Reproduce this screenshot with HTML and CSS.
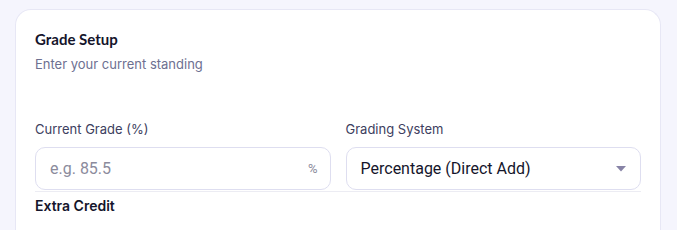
FILE: index.html
```html
<!DOCTYPE html>
<html lang="en">

<head>
    <meta charset="UTF-8">
    <meta name="viewport" content="width=device-width, initial-scale=1.0">
    <title>Grade Setup</title>
    <link rel="stylesheet" href="styles.css">
</head>

<body>
    <div class="card">
        <h2 class="card-title">Grade Setup</h2>
        <p class="card-sub">Enter your current standing</p>

        <div class="form-row">
            <div class="form-group">
                <label for="grade">Current Grade (%)</label>
                <div class="input-wrap">
                    <input type="text" id="grade" placeholder="e.g. 85.5">
                    <span class="suffix">%</span>
                </div>
            </div>
            <div class="form-group">
                <label for="system">Grading System</label>
                <div class="select-wrap">
                    <span class="select-value">Percentage (Direct Add)</span>
                    <svg class="caret" width="10" height="6" viewBox="0 0 10 6"><path d="M0 0h10L5 5.5z" fill="#8783a6"/></svg>
                </div>
            </div>
        </div>

        <h3 class="section-title">Extra Credit</h3>
    </div>
</body>

</html>
```

FILE: styles.css
```css
body {
    margin: 0;
    background-color: #f5f5fd;
    font-family: Inter, "Open Sans", sans-serif;
    color: #1a1a2e;
    overflow: hidden;
}

.card {
    margin: 9px 16px 0 15px;
    background-color: #ffffff;
    border: 1px solid #e7e7f5;
    border-bottom: none;
    border-radius: 16px 16px 0 0;
    padding: 19px 19px 20px 19px;
    height: 200px;
}

.card-title {
    font-family: Lato, sans-serif;
    font-size: 15px;
    font-weight: 700;
    margin: 0;
    line-height: 20px;
    color: #14142b;
}

.card-sub {
    margin: 6px 0 0;
    font-size: 13px;
    line-height: 18px;
    color: #6d7091;
}

.form-row {
    display: grid;
    grid-template-columns: 1fr 1fr;
    gap: 15px;
    margin-top: 47px;
    padding-bottom: 1px;
    border-bottom: 1px solid #ececf3;
}

.form-group label {
    display: block;
    font-size: 13px;
    line-height: 18px;
    color: #3d4060;
    margin-bottom: 9px;
}

.input-wrap,
.select-wrap {
    display: flex;
    align-items: center;
    height: 41px;
    border: 1px solid #dedef0;
    border-radius: 10px;
    background-color: #ffffff;
}

.input-wrap input {
    flex-grow: 1;
    border: none;
    outline: none;
    background: transparent;
    font-family: Roboto, sans-serif;
    font-size: 16px;
    padding: 0 0 0 14px;
    color: #1a1a2e;
    min-width: 0;
}

.input-wrap input::placeholder {
    color: #8b8b9c;
}

.suffix {
    font-family: Roboto, sans-serif;
    font-size: 13px;
    color: #8b8b9c;
    margin-right: 12px;
}

.select-value {
    flex-grow: 1;
    font-family: Roboto, sans-serif;
    font-size: 16px;
    padding-left: 14px;
    color: #15152b;
}

.caret {
    margin-right: 14px;
}

.section-title {
    margin: 5px 0 0;
    font-size: 14px;
    font-weight: 600;
    line-height: 18px;
    color: #15152b;
}
```
